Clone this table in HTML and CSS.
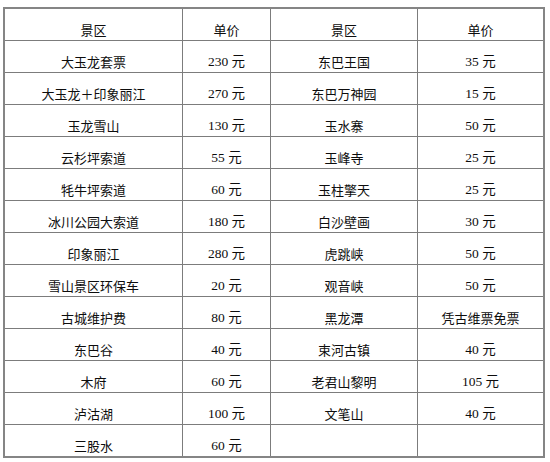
FILE: index.html
```html
<!DOCTYPE html>
<html lang="zh-CN">
<head>
<meta charset="utf-8">
<link rel="stylesheet" href="styles.css">
</head>
<body>
<div class="table">
  <div class="cell">景区</div><div class="cell">单价</div><div class="cell">景区</div><div class="cell">单价</div>
  <div class="cell">大玉龙套票</div><div class="cell price">230 元</div><div class="cell">东巴王国</div><div class="cell price">35 元</div>
  <div class="cell">大玉龙＋印象丽江</div><div class="cell price">270 元</div><div class="cell">东巴万神园</div><div class="cell price">15 元</div>
  <div class="cell">玉龙雪山</div><div class="cell price">130 元</div><div class="cell">玉水寨</div><div class="cell price">50 元</div>
  <div class="cell">云杉坪索道</div><div class="cell price">55 元</div><div class="cell">玉峰寺</div><div class="cell price">25 元</div>
  <div class="cell">牦牛坪索道</div><div class="cell price">60 元</div><div class="cell">玉柱擎天</div><div class="cell price">25 元</div>
  <div class="cell">冰川公园大索道</div><div class="cell price">180 元</div><div class="cell">白沙壁画</div><div class="cell price">30 元</div>
  <div class="cell">印象丽江</div><div class="cell price">280 元</div><div class="cell">虎跳峡</div><div class="cell price">50 元</div>
  <div class="cell">雪山景区环保车</div><div class="cell price">20 元</div><div class="cell">观音峡</div><div class="cell price">50 元</div>
  <div class="cell">古城维护费</div><div class="cell price">80 元</div><div class="cell">黑龙潭</div><div class="cell">凭古维票免票</div>
  <div class="cell">东巴谷</div><div class="cell price">40 元</div><div class="cell">束河古镇</div><div class="cell price">40 元</div>
  <div class="cell">木府</div><div class="cell price">60 元</div><div class="cell">老君山黎明</div><div class="cell price">105 元</div>
  <div class="cell">泸沽湖</div><div class="cell price">100 元</div><div class="cell">文笔山</div><div class="cell price">40 元</div>
  <div class="cell">三股水</div><div class="cell price">60 元</div><div class="cell"></div><div class="cell"></div>
</div>
</body>
</html>
```
FILE: styles.css
```css
html, body {
  margin: 0;
  padding: 0;
  background: #ffffff;
}
body {
  padding: 7px 0 0 3px;
  font-family: "Noto Sans CJK SC", "Noto Sans", sans-serif;
  color: #0d0d0d;
}
.table {
  display: grid;
  grid-template-columns: 177px 87px 146px 125px;
  grid-auto-rows: 31px;
  gap: 1px;
  width: max-content;
  background: #7c7c7c;
  border: 2px solid #858585;
}
.cell {
  background: #ffffff;
  display: flex;
  align-items: center;
  justify-content: center;
  box-sizing: border-box;
  padding-top: 9px;
  font-size: 13px;
  line-height: 13px;
  white-space: nowrap;
}
.price {
  font-family: "Liberation Serif", "Noto Sans CJK SC", serif;
  font-size: 13.5px;
}
```
